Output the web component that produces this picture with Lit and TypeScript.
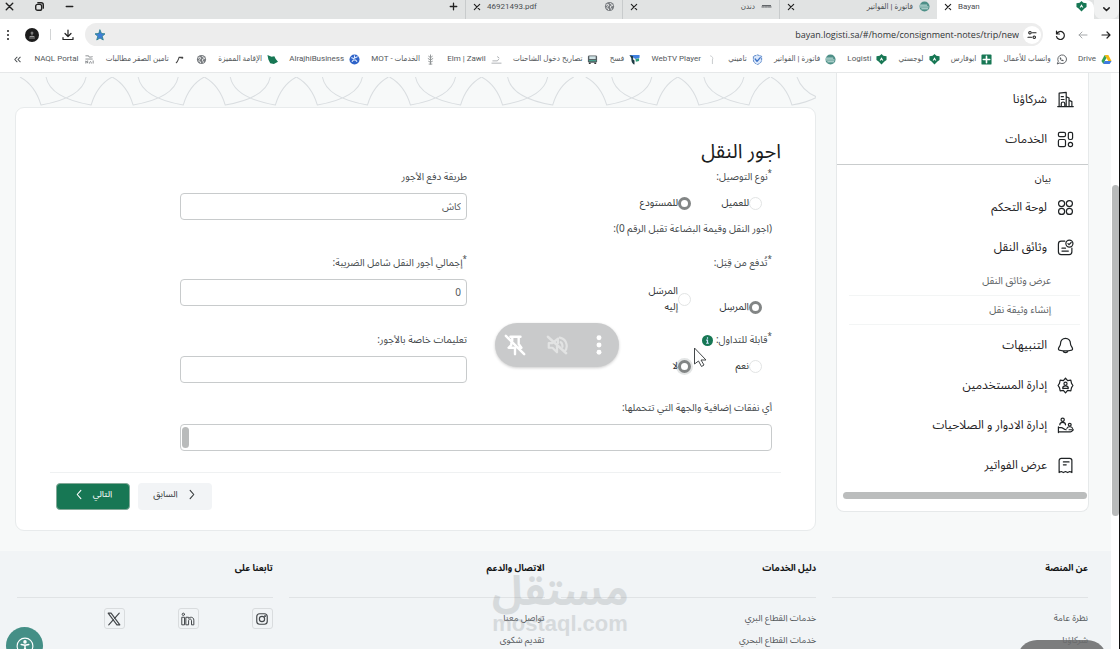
import { LitElement, html, svg, css, nothing, TemplateResult } from "lit";
import { customElement } from "lit/decorators.js";

const line = (body: TemplateResult, cls = "ic") =>
  html`<svg class=${cls} viewBox="0 0 24 24" fill="none" stroke="currentColor" stroke-width="1.7" stroke-linecap="round" stroke-linejoin="round" aria-hidden="true">${body}</svg>`;

const logisti = svg`<path d="M12 0l4 4 7 1v8l-4 3-7 7-7-7-4-3V5l7-1z" fill="#177754" stroke="none"/><path d="M12 7l4 7h-2.500l-1.500-2-1.500 2H8z" fill="#fff" stroke="none"/>`;
const globe = svg`<circle cx="12" cy="12" r="10" fill="#777b7f" stroke="none"/><path d="M5 9c3-4 6-1 5 1s-2 3-3 1M13 5c2 3 5 1 6 5-3 1-5 0-5 3s2 2 2 5M6 15c3 0 4 2 4 4" stroke="#fff" stroke-width="2"/>`;
const bill = svg`<circle cx="12" cy="12" r="11" fill="#4d8f87" stroke="none"/><path d="M3 9h14M2 13h18M6 17h13" stroke="#d5ebe8" stroke-width="2"/>`;

const favicons: Record<string, TemplateResult> = {
  drive: svg`<g stroke="none"><path d="M8 2h8l7 13h-8z" fill="#f5b912"/><path d="M8 2l4 7-7 13-4-7z" fill="#35a156"/><path d="M8 15h15l-4 7H5z" fill="#3f7be0"/><path d="M12 9l3.500 6H8.500z" fill="#fff"/></g>`,
  whatsapp: svg`<path d="M3 21l2-5a9.500 9.500 0 1 1 4 4z" stroke="#55595d" stroke-width="2"/><path d="M8 8c0 4 4 8 8 8l1-2-3-2-1 1c-1 0-2-1-2-2l1-1-2-3z" fill="#55595d" stroke="none"/>`,
  sheet: svg`<rect x="1" y="1" width="22" height="22" rx="2" fill="#177754" stroke="none"/><path d="M12 5v14M5 12h14" stroke="#fff" stroke-width="3.500"/>`,
  logisti, globe, bill,
  shield: svg`<path d="M12 2l9 3v8c0 5-4 8-9 10-5-2-9-5-9-10V5z" fill="#dbe8fb" stroke="#4f7fc4" stroke-width="2" stroke-dasharray="4 3"/><path d="M7 11l4 5 7-8" stroke="#3d73c6" stroke-width="3"/>`,
  web: svg`<path d="M10 4c4 1 6 5 4 9v8" stroke="#c4c7c9" stroke-width="2"/>`,
  fasah: svg`<g stroke="none"><path d="M1 2h22v6l-9 3z" fill="#3f80e0"/><path d="M1 2l8 3v7l3 2v9c-6-2-7-9-7-14z" fill="#1d3b44"/><path d="M14 11l8-2v6l-7 2z" fill="#2d9c76"/></g>`,
  truck: svg`<g stroke="none"><rect x="2" y="3" width="20" height="16" rx="3" fill="#555c60"/><rect x="5" y="5" width="14" height="6" fill="#cfe2e4"/><path d="M4 13h16v3H4z" fill="#45a08c"/><path d="M4 19h4v3H4zM16 19h4v3h-4z" fill="#333"/></g>`,
  elm: svg`<path d="M2 20h20M4 15h10l3-4M14 6l3 2" stroke="#a8acaf" stroke-width="2"/>`,
  mot: svg`<path d="M12 2v20M8 5l4 3 4-3M7 10l5 3 5-3M8 16l4 2 4-2M9 22h6" stroke="#8a8e91" stroke-width="2"/>`,
  rajhi: svg`<circle cx="12" cy="12" r="11" fill="#2e63c8" stroke="none"/><path d="M6 8l4 2M14 8l4-2M7 16l3-3h4l3 3M12 4v5" stroke="#e4eeff" stroke-width="2.400"/>`,
  map: svg`<path d="M1 2l9 4 6-1 3 6 5 6-9 5-8-2-4-8z" fill="#177754" stroke="none"/>`,
  saqr: svg`<path d="M5 19c3-2 4-6 6-11M11 7h8M11 7l8 2" stroke="#444" stroke-width="2.400"/>`,
  naql: svg`<path d="M4 4h6c0 4 4 3 8 2M4 11h14M4 20v-5l4 5v-5M12 20c0-5 4-5 4 0M20 15v5" stroke="#777b7e" stroke-width="1.800"/>`,
};
const fav = (n: string) => line(favicons[n], "fav");

const bookmarks: [string, string][] = [
  ["Drive", "drive"], ["واتساب للأعمال", "whatsapp"], ["ابوفارس", "sheet"], ["لوجستي", "logisti"],
  ["Logisti", "logisti"], ["فاتورة | الفواتير", "bill"], ["تاميني", "shield"], ["WebTV Player", "web"],
  ["فسح", "fasah"], ["تصاريح دخول الشاحنات", "truck"], ["Elm | Zawil", "elm"], ["الخدمات - MOT", "mot"],
  ["AlrajhiBusiness", "rajhi"], ["الإقامة المميزة", "map"], ["", "globe"], ["تامين الصقر مطالبات", "saqr"],
  ["NAQL Portal", "naql"],
];

const menuIcons: Record<string, TemplateResult> = {
  partners: svg`<path d="M3 22V3l10-1v20M13 8l4 2v12M17 13l4 2v7M1 22h22M6 8h3M6 12h4M6 22v-4a2 2 0 0 1 5 0v4"/>`,
  services: svg`<rect x="2" y="2" width="10" height="6" rx="2"/><rect x="2" y="12" width="10" height="10" rx="2"/><rect x="16" y="2" width="6" height="10" rx="2"/><circle cx="19" cy="19" r="3"/>`,
  board: svg`<circle cx="6.500" cy="6.500" r="4.300"/><circle cx="17.500" cy="6.500" r="4.300"/><circle cx="6.500" cy="17.500" r="4.300"/><circle cx="17.500" cy="17.500" r="4.300"/>`,
  docs: svg`<path d="M11 3H6a4 4 0 0 0-4 4v11a4 4 0 0 0 4 4h11a4 4 0 0 0 4-4v-5M7 13h5M7 17h9"/><circle cx="17.500" cy="6.500" r="5"/><path d="M15.500 6.500l1.500 1.500 3-3"/>`,
  bell: svg`<path d="M12 2C7.500 2 5 5.500 5 9c0 4-3 5-3 8 0 1.500 3 2.300 6.500 2.500h7c3.500-.2 6.500-1 6.500-2.500 0-3-3-4-3-8 0-3.500-2.500-7-7-7zM8.500 19.500c1 3.500 6 3.500 7 0"/>`,
  users: svg`<path d="M12 1.500l3 3.500 4.500-.5 1 4.500 2 3-2 3-1 4.500-4.500-.5-3 3.500-3-3.500-4.500.5-1-4.500-2-3 2-3 1-4.500L9 5z"/><circle cx="12" cy="9.500" r="2.200"/><path d="M8 16c0-4.500 8-4.500 8 0z"/>`,
  roles: svg`<circle cx="8" cy="4" r="2.300"/><path d="M4 11c0-4.500 8-4.500 8 0M2 14v8M2 15h4c3 0 3 3 7 3M2 21h17c2 0 3-2 4-3h-6"/><circle cx="18" cy="11" r="2"/><path d="M14 16c1-3 7-3 8 0"/>`,
  bills: svg`<path d="M3 5a3 3 0 0 1 3-3h12a3 3 0 0 1 3 3v17l-3-1.500-3 1.500-3-1.500L9 22l-3-1.500L3 22zM9 7h8M9 11h4"/>`,
};

const footerCols = [
  { title: "عن المنصة", links: ["نظرة عامة", "شركاؤنا"] },
  { title: "دليل الخدمات", links: ["خدمات القطاع البري", "خدمات القطاع البحري"] },
  { title: "الاتصال والدعم", links: ["تواصل معنا", "تقديم شكوى"] },
];

const arch = (s: number) => svg`<path d="M${s} 0q15 8 21 28q41-7 45-28M${s + 92} 0q-15 8-21 28q-41-7-45-28"/>`;

@customElement("browser-chrome")
class BrowserChrome extends LitElement {
  static styles = css`
    :host { display: block; font: 8px/12px "Roboto", "DejaVu Sans Condensed", sans-serif; color: #4a4e51; }
    button { border: 0; background: none; padding: 0; color: #222; display: grid; place-items: center; }
    .fav { width: 11px; height: 11px; flex: none; }
    .ic { width: 13px; height: 13px; flex: none; }
    .tabs { display: flex; height: 19px; background: #e1e3e3; align-items: stretch; overflow: hidden; }
    .more { width: 25px; background: #f0f1f1; border-radius: 0 0 8px 8px; }
    .tab { box-sizing: border-box; display: flex; align-items: center; width: 157px; padding: 0 7px 6px; gap: 6px; }
    .tab span { flex: 1; direction: rtl; }
    .tab .x { width: 8px; height: 8px; color: #222; }
    .active { background: #fff; border-radius: 0 8px 0 0; }
    .active span, .pdf span { direction: ltr; }
    .line { border-inline-start: 1px solid #c8cbcc; }
    .plus { padding: 0 5px 6px; border-inline-start: 1px solid #c8cbcc; }
    .win { margin-inline-start: auto; display: flex; gap: 17px; padding: 0 3px 7px; }
    .bar { display: flex; align-items: center; gap: 11px; height: 31px; background: #fff; padding-inline: 7px 2px; color: #333; }
    .bar .ic { width: 12px; height: 12px; }
    .omni { flex: 1; display: flex; align-items: center; justify-content: space-between; height: 23px; border-radius: 12px; background: #ededed; padding-inline: 2px 9px; }
    .url { display: flex; align-items: center; gap: 4px; flex: 1; }
    .url input { flex: 1; border: 0; background: none; direction: ltr; text-align: right; font: 9px/14px "Open Sans", sans-serif; color: #303335; outline: 0; padding: 0; }
    .site { width: 18px; height: 18px; border-radius: 50%; background: #fff; }
    .star { width: 12px; height: 12px; }
    .sep { width: 1px; height: 11px; background: #d2d4d5; }
    .avatar { width: 14px; height: 14px; border-radius: 50%; background: #1c1c1c; color: #aaa; }
    nav { box-sizing: border-box; display: flex; align-items: center; justify-content: space-between; height: 23px; background: #fff; border-bottom: 1px solid #e6e8e9; padding: 0 7px 4px 12px; }
    a { display: flex; gap: 5px; align-items: center; color: #54585b; text-decoration: none; white-space: nowrap; }
  `;
  render() {
    const x = line(svg`<path d="M4 4l16 16M20 4L4 20" stroke-width="3.500"/>`, "x");
    return html`
      <div class="tabs">
        <button class="more" aria-label="Tabs">${line(svg`<path d="M7 9l5 5 5-5" stroke-width="2.800"/>`)}</button>
        <div class="tab active">${fav("logisti")}<span>Bayan</span>${x}</div>
        <div class="tab">${fav("bill")}<span>فاتورة | الفواتير</span>${x}</div>
        <div class="tab line">${line(svg`<path d="M2 13h5M9 13h5M16 13h6M3 10h18" stroke-width="2"/>`, "fav")}<span>دندن</span>${x}</div>
        <div class="tab line pdf">${fav("globe")}<span>46921493.pdf</span>${x}</div>
        <button class="plus" aria-label="+">${line(svg`<path d="M12 6v12M6 12h12" stroke-width="2.400"/>`)}</button>
        <div class="win">
          <button aria-label="Minimize">${line(svg`<path d="M6 12h12" stroke-width="2.600"/>`)}</button>
          <button aria-label="Restore">${line(svg`<rect x="5" y="8" width="11" height="11" rx="3.500" stroke-width="2.600"/><path d="M9 5h6a4 4 0 0 1 4 4v6" stroke-width="2.600"/>`)}</button>
          <button aria-label="Close">${line(svg`<path d="M6 6l12 12M18 6L6 18" stroke-width="2.600"/>`)}</button>
        </div>
      </div>
      <div class="bar">
        <button aria-label="Back">${line(svg`<path d="M4 12h16M14 6l6 6-6 6" stroke-width="2.400"/>`)}</button>
        <button aria-label="Forward">${line(svg`<path d="M20 12H4M10 6l-6 6 6 6" stroke-width="2" stroke="#a5a8aa"/>`)}</button>
        <button aria-label="Reload">${line(svg`<path d="M5 4v6h6M5.500 9.500A8 8 0 1 1 5 15" stroke-width="2.400"/>`)}</button>
        <div class="omni">
          <div class="url">
            <button class="site" aria-label="Site">${line(svg`<circle cx="8" cy="7.500" r="2.500" stroke-width="2.200"/><path d="M13 7.500h7M4 16.500h7" stroke-width="2.400"/><circle cx="16.500" cy="16.500" r="2.500" stroke-width="2.200"/>`)}</button>
            <input aria-label="URL" value="bayan.logisti.sa/#/home/consignment-notes/trip/new" />
          </div>
          ${line(svg`<path d="M12 2l3 7 7 .7-5.500 4.800L18.500 22 12 18l-6.500 4 2-7.500L2 9.700 9 9z" fill="#3d7fd6" stroke="#2c7f8e"/>`, "star")}
        </div>
        <button aria-label="Downloads">${line(svg`<path d="M12 2v12M6 9l6 6 6-6M2 17v4h20v-4" stroke-width="2.400"/>`)}</button>
        <span class="sep"></span>
        <button class="avatar" aria-label="Profile">${line(svg`<path d="M12 6v6M8 15h8M7 18h10M10 8h4" />`)}</button>
        <button aria-label="Menu">${line(svg`<g fill="currentColor" stroke="none"><circle cx="12" cy="4" r="2"/><circle cx="12" cy="12" r="2"/><circle cx="12" cy="20" r="2"/></g>`)}</button>
      </div>
      <nav>
        ${bookmarks.map(([t, i]) => html`<a href="#" aria-label=${t || "link"}>${fav(i)}${t ? html`<span>${t}</span>` : nothing}</a>`)}
        ${line(svg`<path d="M11 7l-5 5 5 5M18 7l-5 5 5 5" stroke-width="2.200"/>`, "fav")}
      </nav>`;
  }
}

@customElement("side-menu")
class SideMenu extends LitElement {
  static styles = css`
    :host { display: block; background: #fff; border: 1px solid #e6e9ea; border-top: 0; border-radius: 0 0 8px 8px; padding-block: 6px 12px; color: #1f2325; }
    a { color: inherit; text-decoration: none; }
    .item { display: flex; align-items: center; gap: 10px; height: 40px; padding-inline-start: 14px; font-size: 12px; }
    .ic { width: 17px; height: 17px; flex: none; }
    .cap { border-top: 1px solid #c9cccd; margin: 5px 0 0; padding: 6px 37px 0 0; font-size: 10px; line-height: 16px; }
    .sub { display: block; font-size: 10px; line-height: 28px; color: #5c6164; margin-inline: 8px 12px; padding-inline-start: 29px; border-bottom: 1px solid #f3f5f5; }
    .thumb { height: 7px; border-radius: 4px; background: #bbbdbd; margin: 7px 1px 0 6px; }
  `;
  item(t: string, i: string) {
    return html`<a class="item" href="#">${line(menuIcons[i])}<span>${t}</span></a>`;
  }
  render() {
    return html`
      ${this.item("شركاؤنا", "partners")}${this.item("الخدمات", "services")}
      <p class="cap">بيان</p>
      ${this.item("لوحة التحكم", "board")}${this.item("وثائق النقل", "docs")}
      <a class="sub" href="#">عرض وثائق النقل</a>
      <a class="sub" href="#">إنشاء وثيقة نقل</a>
      ${this.item("التنبيهات", "bell")}${this.item("إدارة المستخدمين", "users")}
      ${this.item("إدارة الادوار و الصلاحيات", "roles")}${this.item("عرض الفواتير", "bills")}
      <div class="thumb"></div>`;
  }
}

@customElement("freight-form")
class FreightForm extends LitElement {
  static styles = css`
    :host { display: block; background: #fff; border: 1px solid #e8ebec; border-radius: 9px; padding: 28px 34px 20px; color: #45494c; }
    h1 { margin: 0; font-size: 20px; line-height: 32px; font-weight: 400; color: #1b1d1e; }
    .grid { display: grid; grid-template-columns: 1fr 1fr; gap: 16px 18px; margin-inline: 9px 130px; font-size: 10px; }
    .cell { display: flex; flex-direction: column; }
    .wide { grid-column: 1 / -1; }
    label, legend, .note { line-height: 18px; padding: 0; }
    fieldset { border: 0; margin: 0; padding: 0; min-width: 0; }
    .field { height: 27px; box-sizing: border-box; border: 1px solid #c8cbcc; border-radius: 4px; background: #fff; width: 100%; margin: 7px 0 0; padding: 0 5px; font: inherit; font-size: 10px; color: #54585b; resize: none; display: block; overflow: hidden; outline: 0; }
    .area { position: relative; }
    .grip { position: absolute; inset-inline-end: 2px; top: 10px; width: 7px; height: 21px; border-radius: 4px; background: #b9bbbb; }
    .opts { display: flex; padding-inline-start: 10px; }
    .short { padding-block: 9px; }
    .tall { padding-block-start: 11px; align-items: flex-end; }
    .opt { display: flex; align-items: center; width: 71px; line-height: 16px; color: #303436; }
    .opt span { white-space: nowrap; }
    input[type="radio"] { appearance: none; width: 13px; height: 13px; margin: 0; border: 1px solid #e2e4e4; border-radius: 50%; background: #fff; flex: none; }
    input[type="radio"]:checked { border: 3px solid #828585; }
    input.focus { box-shadow: 0 0 0 2px #e3e5e5; }
    .info { display: inline-block; vertical-align: middle; width: 11px; height: 11px; }
    sup { font-size: 8px; line-height: 0; vertical-align: 4px; }
    .actions { display: flex; direction: ltr; gap: 8px; margin-top: 21px; padding: 10px 6px 0; border-top: 1px solid #eff1f2; }
    button { width: 74px; height: 27px; border: 0; border-radius: 4px; font: inherit; font-size: 9px; line-height: 16px; display: flex; direction: rtl; align-items: center; justify-content: center; gap: 8px; padding: 0 0 4px; background: #f2f4f6; color: #34383a; }
    .next { background: #177754; color: #fff; border: 1px solid #83a998; }
    .arr { width: 11px; height: 11px; }
  `;
  opt(name: string, label: unknown, checked = false, focus = false) {
    return html`<label class="opt"><input type="radio" class=${focus ? "focus" : ""} name=${name} .checked=${checked} /><span>${label}</span></label>`;
  }
  render() {
    return html`
      <h1>اجور النقل</h1>
      <form class="grid">
        <fieldset class="cell">
          <legend><sup>*</sup>نوع التوصيل:</legend>
          <div class="opts short">${this.opt("t", "للعميل")}${this.opt("t", "للمستودع", true)}</div>
          <div class="note">(اجور النقل وقيمة البضاعة تقبل الرقم 0):</div>
        </fieldset>
        <div class="cell"><label for="pay">طريقة دفع الأجور</label><input class="field" id="pay" value="كاش" /></div>
        <fieldset class="cell">
          <legend><sup>*</sup>تُدفع من قِبَل:</legend>
          <div class="opts tall">${this.opt("p", "المرسِل", true)}${this.opt("p", html`المرسَل<br />إليه`)}</div>
        </fieldset>
        <div class="cell"><label for="total"><sup>*</sup>إجمالي أجور النقل شامل الضريبة:</label><input class="field" id="total" value="0" /></div>
        <fieldset class="cell">
          <legend><sup>*</sup>قابلة للتداول:
            <svg class="info" viewBox="0 0 24 24" aria-hidden="true"><circle cx="12" cy="12" r="12" fill="#177754"/><path d="M12 5v3M9 11h3v6M9 18h6" stroke="#cfe6ff" stroke-width="2.600" fill="none"/></svg>
          </legend>
          <div class="opts short">${this.opt("n", "نعم")}${this.opt("n", "لا", true, true)}</div>
        </fieldset>
        <div class="cell"><label for="notes">تعليمات خاصة بالأجور:</label><input class="field" id="notes" /></div>
        <div class="cell wide">
          <label for="extra">أي نفقات إضافية والجهة التي تتحملها:</label>
          <div class="area"><textarea class="field" id="extra" rows="1"></textarea><span class="grip"></span></div>
        </div>
      </form>
      <div class="actions">
        <button class="next"><span>التالي</span>${line(svg`<path d="M15 3l-8 9 8 9" stroke-width="2.400"/>`, "arr")}</button>
        <button>${line(svg`<path d="M9 3l8 9-8 9" stroke-width="2.400"/>`, "arr")}<span>السابق</span></button>
      </div>`;
  }
}

@customElement("site-footer")
class SiteFooter extends LitElement {
  static styles = css`
    :host { display: grid; grid-template-columns: repeat(4, 1fr); gap: 16px; background: #f1f4f6; padding: 9px 23px 0 17px; }
    h2 { margin: 0 0 10px; font-size: 9px; line-height: 18px; padding-bottom: 19px; border-bottom: 1px solid #e0e3e5; color: #111314; }
    a { color: #54585b; text-decoration: none; display: block; font-size: 9px; line-height: 22px; }
    .soc { display: flex; gap: 53px; }
    .soc a { width: 19px; height: 19px; border: 1px solid #d9dcde; border-radius: 3px; display: grid; place-items: center; color: #44484b; }
    .ic { width: 14px; height: 14px; }
  `;
  render() {
    return html`
      ${footerCols.map((c) => html`<section><h2>${c.title}</h2>${c.links.map((l) => html`<a href="#">${l}</a>`)}</section>`)}
      <section>
        <h2>تابعنا على</h2>
        <div class="soc">
          <a href="#" aria-label="Instagram">${line(svg`<rect x="3" y="3" width="18" height="18" rx="5" stroke-width="2"/><circle cx="12" cy="12" r="4.500" stroke-width="2"/><circle cx="17" cy="7" r=".8" fill="currentColor"/>`)}</a>
          <a href="#" aria-label="LinkedIn">${line(svg`<path d="M2 9h4v13H2zM9 9h4v2c2-3 9-3 9 3v8h-4v-7c0-4-5-4-5 0v7H9z"/><circle cx="4" cy="4" r="2"/>`)}</a>
          <a href="#" aria-label="X">${line(svg`<path d="M2 2h5l15 20h-5zM21 2l-8 9M3 22l8-9" stroke-width="2"/>`)}</a>
        </div>
      </section>`;
  }
}

@customElement("app-root")
class AppRoot extends LitElement {
  static styles = css`
    :host { display: flex; flex-direction: column; height: 100vh; overflow: hidden; direction: rtl; position: relative; background: #fff; box-sizing: border-box; border-right: 1px solid #111; font-family: "Noto Sans Arabic", "DejaVu Sans Condensed", sans-serif; }
    .view { flex: 1; min-height: 0; display: flex; }
    .track { width: 8px; flex: none; background: #fff; box-sizing: border-box; padding: 112px 0 0 1px; }
    .thumb { height: 331px; border-radius: 4px; background: #b9bbbb; }
    .page { flex: 1; min-width: 0; background: #f7f9f9; display: flex; flex-direction: column; }
    .cols { display: flex; align-items: flex-start; gap: 20px; padding: 0 22px 20px 15px; }
    side-menu { width: 251px; flex: none; }
    main { flex: 1; min-width: 0; padding-top: 4px; }
    .deco { display: block; width: 100%; height: 30px; }
    site-footer { flex: 1; }
    .pill { position: absolute; left: 495px; top: 323px; width: 124px; height: 44px; box-sizing: border-box; padding: 0 9px; border-radius: 22px; background: #c9cacb; box-shadow: 0 1px 3px #0003; display: flex; direction: ltr; align-items: center; justify-content: space-between; }
    .pill button { border: 0; background: none; padding: 0; color: #fff; display: grid; }
    .pill .dim { color: #e2e3e3; }
    .big { width: 22px; height: 22px; }
    .cursor { position: absolute; left: 693px; top: 346px; width: 14px; height: 22px; }
    .mark { position: absolute; left: 492px; top: 570px; width: 136px; direction: ltr; text-align: center; color: #8c9296; opacity: 0.26; font-weight: 700; pointer-events: none; }
    .mark b { display: block; font: 700 41px/44px "Noto Sans Arabic", "DejaVu Sans", sans-serif; }
    .mark span { display: block; font: 700 22px/20px "Liberation Sans", sans-serif; }
    .access { position: absolute; left: 6px; bottom: -15px; width: 37px; height: 37px; border-radius: 50%; border: 0; padding: 0; background: #448f86; color: #fff; display: grid; place-items: center; }
    .access svg { width: 18px; height: 18px; }
    .tip { position: absolute; right: 12px; bottom: -31px; width: 90px; height: 40px; border-radius: 20px; background: #6b6c6de0; }
  `;
  render() {
    return html`
      <browser-chrome></browser-chrome>
      <div class="view">
        <div class="track"><div class="thumb"></div></div>
        <div class="page">
          <div class="cols">
            <side-menu></side-menu>
            <main>
              <svg class="deco" viewBox="0 0 800 30" preserveAspectRatio="xMinYMin slice" fill="none" stroke="#d9dde0" stroke-width="1" aria-hidden="true">
                ${[5, 97, 189, 281, 374, 466, 570, 662].map(arch)}<path d="M755 0q15 8 21 28q16-3 25-8q-15-6-20-20"/>
              </svg>
              <freight-form></freight-form>
            </main>
          </div>
          <site-footer></site-footer>
        </div>
      </div>
      <div class="mark"><b>مستقل</b><span>mostaql.com</span></div>
      <div class="pill">
        <button aria-label="Unpin">${line(svg`<path d="M2 2l20 20" stroke-width="2.600"/><path d="M7 3h11M9 4v3M16 4v7l3 4h-4M8 10v2l-3 3h7v7" stroke-width="2.600"/>`, "big")}</button>
        <button class="dim" aria-label="Mute">${line(svg`<path d="M2 3l20 18" stroke-width="2.600"/><path d="M3 10h4l6-5v5M3 10v5h4l5 5v-7M15 4c9 2 9 12 5 15M16 9c2 1 2 3 2 5" stroke-width="2.400"/>`, "big")}</button>
        <button aria-label="More">${line(svg`<g fill="currentColor" stroke="none"><circle cx="12" cy="4" r="2.700"/><circle cx="12" cy="12" r="2.700"/><circle cx="12" cy="20" r="2.700"/></g>`, "big")}</button>
      </div>
      <svg class="cursor" viewBox="0 0 14 22" aria-hidden="true"><path d="M1.500 2v16l4-3 3 5.500 2.500-1.500-3-5h5z" fill="#fff" stroke="#44484a"/></svg>
      <button class="access" aria-label="Accessibility">${line(svg`<circle cx="12" cy="12" r="10.500" stroke-width="1.500"/><circle cx="12" cy="6.500" r="1.500" fill="currentColor"/><path d="M7 10l5 1 5-1M12 11v4l-2.500 4M12 15l2.500 4" stroke-width="2"/>`)}</button>
      <div class="tip"></div>`;
  }
}
